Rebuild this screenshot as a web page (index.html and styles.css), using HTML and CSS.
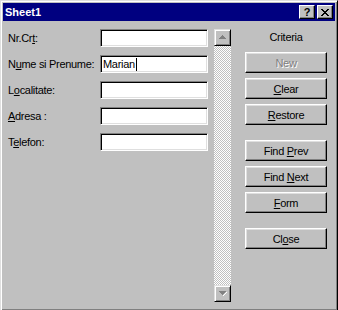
FILE: index.html
```html
<!DOCTYPE html>
<html lang="en">
<head>
    <meta charset="UTF-8">
    <meta name="viewport" content="width=device-width, initial-scale=1.0">
    <title>Sheet1</title>
    <link rel="stylesheet" href="styles.css">
</head>
<body>
    <div class="window">
        <div class="titlebar">
            <span class="title">Sheet1</span>
            <div class="title-buttons">
                <div class="tbtn help">?</div>
                <div class="tbtn">
                    <svg width="8" height="7" viewBox="0 0 8 7" shape-rendering="crispEdges">
                        <path d="M0 0h2v1h-2zM6 0h2v1h-2zM1 1h2v1h-2zM5 1h2v1h-2zM2 2h4v1h-4zM3 3h2v1h-2zM2 4h4v1h-4zM1 5h2v1h-2zM5 5h2v1h-2zM0 6h2v1h-2zM6 6h2v1h-2z" fill="#000"/>
                    </svg>
                </div>
            </div>
        </div>

        <div class="body">
            <div class="fields">
                <label>Nr.Cr<u>t</u>:</label>
                <div class="field"></div>
                <label>N<u>u</u>me si Prenume:</label>
                <div class="field"><span>Marian</span><span class="caret"></span></div>
                <label>L<u>o</u>calitate:</label>
                <div class="field"></div>
                <label><u>A</u>dresa :</label>
                <div class="field"></div>
                <label>T<u>e</u>lefon:</label>
                <div class="field"></div>
            </div>

            <div class="scrollbar">
                <div class="sbtn">
                    <svg width="8" height="5" viewBox="0 0 8 5" shape-rendering="crispEdges">
                        <path d="M4 1h1v1h1v1h1v1h-1v-1h-1v-1h-1z" fill="#fff"/>
                        <path d="M3 0h1v1h1v1h1v1h1v1h-7v-1h1v-1h1v-1h1z" fill="#808080"/>
                    </svg>
                </div>
                <div class="track"></div>
                <div class="sbtn">
                    <svg width="8" height="5" viewBox="0 0 8 5" shape-rendering="crispEdges">
                        <path d="M7 1h1v1h-1v1h-1v1h-1v1h-1v-1h1v-1h1v-1h1z" fill="#fff"/>
                        <path d="M0 0h7v1h-1v1h-1v1h-1v1h-1v-1h-1v-1h-1v-1h-1z" fill="#808080"/>
                    </svg>
                </div>
            </div>

            <div class="actions">
                <div class="criteria">Criteria</div>
                <div class="btn disabled"><span>New</span></div>
                <div class="btn"><span><u>C</u>lear</span></div>
                <div class="btn"><span><u>R</u>estore</span></div>
                <div class="btn group"><span>Find <u>P</u>rev</span></div>
                <div class="btn"><span>Find <u>N</u>ext</span></div>
                <div class="btn"><span><u>F</u>orm</span></div>
                <div class="btn group"><span>Cl<u>o</u>se</span></div>
            </div>
        </div>
    </div>
</body>
</html>
```

FILE: styles.css
```css
html, body {
    margin: 0;
    padding: 0;
    background: #c0c0c0;
}

body {
    font-family: "Liberation Sans", Arial, sans-serif;
    font-size: 11px;
    letter-spacing: -0.3px;
    color: #000;
}

.window {
    box-sizing: border-box;
    width: 338px;
    height: 311px;
    padding: 2px;
    background: #c0c0c0;
    border: 1px solid;
    border-color: #dfdfdf #000 #000 #dfdfdf;
    box-shadow: inset 1px 1px #fff, inset -1px -1px #808080;
}

/* title bar */

.titlebar {
    display: flex;
    align-items: center;
    justify-content: space-between;
    height: 18px;
    padding: 0 2px 0 2px;
    background: #000080;
}

.title {
    color: #fff;
    font-weight: bold;
    font-size: 11px;
    letter-spacing: 0;
}

.title-buttons {
    display: flex;
    gap: 2px;
}

.tbtn {
    box-sizing: border-box;
    display: flex;
    align-items: center;
    justify-content: center;
    width: 16px;
    height: 14px;
    background: #c0c0c0;
    border: 1px solid;
    border-color: #fff #000 #000 #fff;
    box-shadow: inset -1px -1px #808080;
}

.tbtn.help {
    font-weight: bold;
    font-size: 11px;
    line-height: 12px;
    letter-spacing: 0;
}

/* body */

.body {
    display: flex;
    align-items: flex-start;
    padding: 8px 0 0 5px;
}

.fields {
    display: grid;
    grid-template-columns: 92px 108px;
    grid-auto-rows: 18px;
    row-gap: 8px;
    align-items: center;
}

.fields label {
    white-space: nowrap;
}

.field {
    box-sizing: border-box;
    height: 18px;
    padding: 0 0 0 2px;
    background: #fff;
    border: 1px solid;
    border-color: #808080 #fff #fff #808080;
    box-shadow: inset 1px 1px #000, inset -1px -1px #dfdfdf;
    display: flex;
    align-items: center;
    line-height: 14px;
}

.caret {
    display: inline-block;
    width: 1px;
    height: 13px;
    margin-left: 1px;
    background: #000;
}

/* scrollbar */

.scrollbar {
    display: flex;
    flex-direction: column;
    width: 17px;
    height: 273px;
    margin-left: 6px;
}

.sbtn {
    box-sizing: border-box;
    display: flex;
    align-items: center;
    justify-content: center;
    height: 17px;
    background: #c0c0c0;
    border: 1px solid;
    border-color: #dfdfdf #000 #000 #dfdfdf;
    box-shadow: inset 1px 1px #fff, inset -1px -1px #808080;
}

.track {
    flex: 1;
    background-color: #c0c0c0;
    background-image: conic-gradient(#fff 90deg, #c0c0c0 90deg 180deg, #fff 180deg 270deg, #c0c0c0 270deg);
    background-size: 2px 2px;
}

/* buttons */

.actions {
    display: flex;
    flex-direction: column;
    gap: 5px;
    width: 82px;
    margin-left: 14px;
}

.criteria {
    height: 16px;
    line-height: 16px;
    text-align: center;
    margin-bottom: 2px;
}

.btn {
    box-sizing: border-box;
    height: 21px;
    display: flex;
    align-items: center;
    justify-content: center;
    background: #c0c0c0;
    border: 1px solid;
    border-color: #fff #000 #000 #fff;
    box-shadow: inset -1px -1px #808080, inset 1px 1px #dfdfdf;
}

.btn.group {
    margin-top: 10px;
}

.btn.disabled {
    color: #808080;
    text-shadow: 1px 1px #fff;
}
```
